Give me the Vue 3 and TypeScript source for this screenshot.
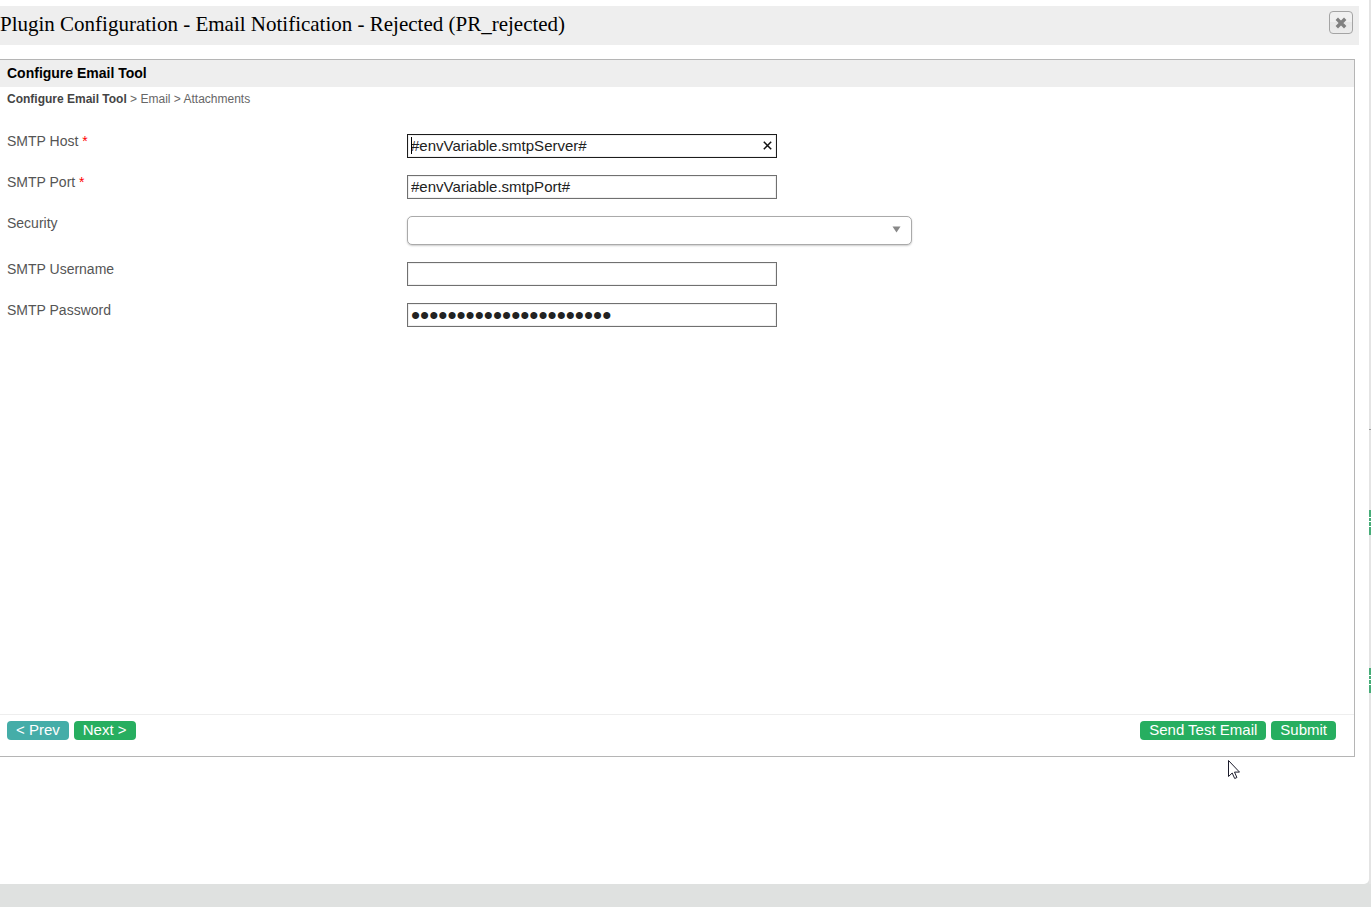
<script setup lang="ts">
import { ref } from 'vue'

const smtpHost = ref('#envVariable.smtpServer#')
const smtpPort = ref('#envVariable.smtpPort#')
const security = ref('')
const username = ref('')
const password = ref('x'.repeat(22))
</script>

<template>
  <div class="page">
    <div class="behind" aria-hidden="true">
      <span class="behind-line"></span>
      <svg class="behind-icon first" width="2" height="25" viewBox="0 0 2 25">
        <path d="M0 0h2v25H0z" fill="#fff" />
        <path d="M0 0h2v7H0zM0 8h2v3H0zM0 12h2v4H0zM0 17h2v8H0z" fill="#47ac78" />
      </svg>
      <svg class="behind-icon second" width="2" height="25" viewBox="0 0 2 25">
        <path d="M0 0h2v25H0z" fill="#fff" />
        <path d="M0 0h2v7H0zM0 8h2v3H0zM0 12h2v4H0zM0 17h2v8H0z" fill="#47ac78" />
      </svg>
    </div>

    <main class="dialog">
      <header class="titlebar">
        <h1>Plugin Configuration - Email Notification - Rejected (PR_rejected)</h1>
        <button class="close" type="button" aria-label="Close">
          <svg width="12" height="12" viewBox="0 0 12 12">
            <path d="M3 3l6 6M9 3l-6 6" stroke="#808080" stroke-width="3.4" stroke-linecap="square" />
          </svg>
        </button>
      </header>

      <form class="panel" @submit.prevent>
        <h2>Configure Email Tool</h2>
        <nav class="crumbs">
          <a href="#" class="current">Configure Email Tool</a> &gt; <a href="#">Email</a> &gt;
          <a href="#">Attachments</a>
        </nav>

        <div class="fields">
          <div class="row">
            <label for="host">SMTP Host <span class="required">*</span></label>
            <div class="control">
              <input id="host" v-model="smtpHost" class="active" type="text" />
              <span class="caret"></span>
              <button class="clear" type="button" aria-label="Clear" @click="smtpHost = ''">
                <svg width="9" height="9" viewBox="0 0 9 9">
                  <path d="M.8.8l7.4 7.4M8.2.8L.8 8.2" stroke="#111" stroke-width="1.5" />
                </svg>
              </button>
            </div>
          </div>
          <div class="row">
            <label for="port">SMTP Port <span class="required">*</span></label>
            <div class="control"><input id="port" v-model="smtpPort" type="text" /></div>
          </div>
          <div class="row">
            <label for="security">Security</label>
            <div class="select-wrap">
              <select id="security" v-model="security"><option value=""></option></select>
              <svg class="arrow" width="9" height="7" viewBox="0 0 9 7">
                <path d="M.5.5h8L4.5 6.5z" fill="#888" />
              </svg>
            </div>
          </div>
          <div class="row">
            <label for="username">SMTP Username</label>
            <div class="control"><input id="username" v-model="username" type="text" /></div>
          </div>
          <div class="row">
            <label for="password">SMTP Password</label>
            <div class="control"><input id="password" v-model="password" type="password" /></div>
          </div>
        </div>

        <footer class="actions">
          <button class="btn prev" type="button">&lt; Prev</button>
          <button class="btn" type="button">Next &gt;</button>
          <span class="spacer"></span>
          <button class="btn" type="button">Send Test Email</button>
          <button class="btn" type="submit">Submit</button>
        </footer>
      </form>
    </main>

    <svg class="pointer" width="12" height="20" viewBox="0 0 12 20" aria-hidden="true">
      <path d="M.5.5v16l3.7-3.5 2.5 5.5 2.2-1-2.4-5.4h5z" fill="#fff" stroke="#1b1b2b" />
    </svg>
  </div>
</template>

<style>
body {
  margin: 0;
  background: #dfe1e0;
}
</style>

<style scoped>
.page {
  position: relative;
  box-sizing: border-box;
  display: flex;
  min-height: 100vh;
  padding: 0 2px 23px 0;
  overflow: hidden;
  background: #dfe1e0;
  font-family: Arial, "Liberation Sans", sans-serif;
  color: #555;
}
.behind {
  position: absolute;
  top: 0;
  right: 0;
  bottom: 23px;
  width: 2px;
  background: #e4e4e4;
}
.behind-line {
  position: absolute;
  top: 429px;
  width: 2px;
  height: 1px;
  background: #999;
}
.behind-icon {
  position: absolute;
  left: 0;
}
.first {
  top: 510px;
}
.second {
  top: 668px;
}
.dialog {
  position: relative;
  box-sizing: border-box;
  display: flex;
  flex: 1;
  flex-direction: column;
  padding: 6px 0 127px;
  border-radius: 0 0 5px 0;
  background: #fff;
}
.titlebar {
  box-sizing: border-box;
  display: flex;
  align-items: flex-start;
  justify-content: space-between;
  height: 39px;
  margin-right: 10px;
  padding: 5px 6px 0 0;
  background: #eee;
}
h1 {
  margin: 0;
  font: 400 21px/26px Georgia, "Liberation Serif", serif;
  color: #000;
}
.close {
  box-sizing: border-box;
  display: flex;
  align-items: center;
  justify-content: center;
  width: 24px;
  height: 23px;
  padding: 0;
  border: 1px solid #a4a4a4;
  border-radius: 4px;
  background: linear-gradient(#f0f0f0 50%, #e6e6e6 50%, #ececec);
}
.panel {
  display: flex;
  flex: 1;
  flex-direction: column;
  margin: 14px 14px 0 0;
  border: 1px solid #b5b5b5;
  border-left: 0;
}
h2 {
  margin: 0;
  padding: 0 7px;
  background: #eee;
  font-size: 14px;
  line-height: 27px;
  color: #000;
}
.crumbs {
  padding: 4px 7px 0;
  font-size: 12px;
  line-height: 16px;
  color: #666;
}
.crumbs a {
  color: #666;
  text-decoration: none;
}
.crumbs .current {
  font-weight: 700;
  color: #444;
}
.fields {
  display: flex;
  flex: 1;
  flex-direction: column;
  gap: 17px;
  padding: 27px 7px;
}
.row {
  display: grid;
  grid-template-columns: 400px minmax(0, 1fr);
  align-items: start;
}
label {
  font-size: 14px;
  line-height: 14px;
}
.required {
  color: #f00;
}
.control {
  position: relative;
  width: 370px;
  max-width: 100%;
  height: 24px;
}
input {
  box-sizing: border-box;
  display: block;
  width: 100%;
  height: 24px;
  padding: 0 3px 2px;
  border: 1px solid #707070;
  border-radius: 0;
  outline: 0;
  background: #fff;
  box-shadow: inset 0 0 0 1px #f0f0f0;
  font: 15px "Liberation Sans", Arial, sans-serif;
  color: #222;
}
input.active {
  border-color: #1c1c1c;
  padding-right: 24px;
}
#password {
  padding-bottom: 0;
  font-size: 26px;
}
.caret {
  position: absolute;
  top: 3px;
  left: 4px;
  width: 1px;
  height: 17px;
  background: #000;
}
.clear {
  position: absolute;
  top: 1px;
  right: 0;
  display: flex;
  align-items: center;
  justify-content: center;
  width: 20px;
  height: 20px;
  padding: 0;
  border: 0;
  background: none;
}
.select-wrap {
  position: relative;
  width: 505px;
  max-width: 100%;
}
select {
  box-sizing: border-box;
  display: block;
  width: 100%;
  height: 29px;
  padding: 0 24px 0 8px;
  border: 1px solid #aaa;
  border-radius: 5px;
  appearance: none;
  background: #fff;
  box-shadow: 0 1px 2px #ccc;
  font: 14px "Liberation Sans", Arial, sans-serif;
}
.arrow {
  position: absolute;
  top: 10px;
  right: 11px;
  pointer-events: none;
}
.actions {
  display: flex;
  align-items: flex-start;
  gap: 5px;
  box-sizing: border-box;
  height: 42px;
  padding: 6px 18px 0 7px;
  border-top: 1px solid #eee;
}
.spacer {
  flex: 1;
}
.btn {
  height: 19px;
  padding: 0 9px 2px;
  border: 0;
  border-radius: 4px;
  background: #27ae60;
  font: 15px/17px "Liberation Sans", Arial, sans-serif;
  color: #fff;
}
.prev {
  background: #45ada8;
}
.pointer {
  position: absolute;
  top: 760px;
  left: 1228px;
}
</style>
